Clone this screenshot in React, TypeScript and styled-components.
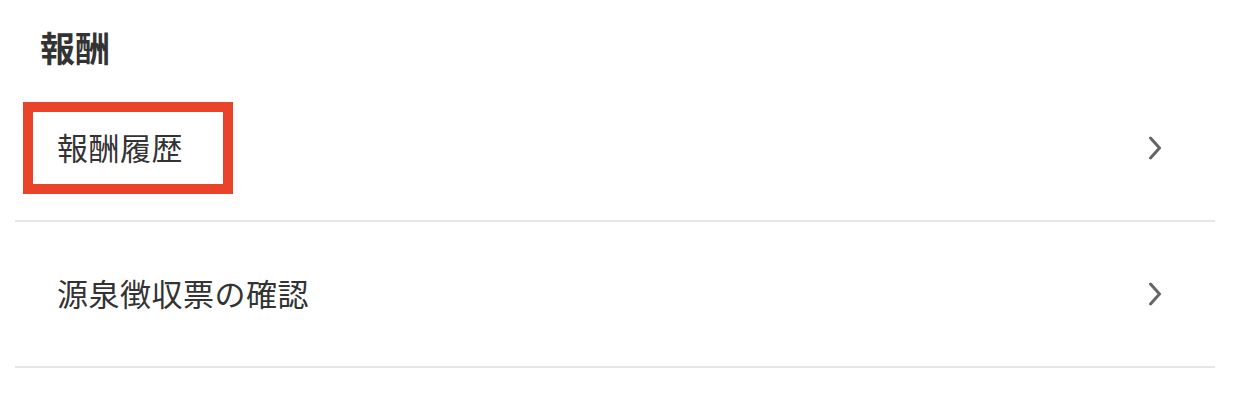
import React from "react";
import styled, { createGlobalStyle } from "styled-components";

const GlobalStyle = createGlobalStyle`
  html, body {
    margin: 0;
    padding: 0;
    background: #ffffff;
  }
  body {
    font-family: "Noto Sans CJK JP", "Noto Sans", sans-serif;
    color: #333333;
  }
`;

const Page = styled.div`
  padding: 0 31px 0 15px;
`;

const SectionTitle = styled.h2`
  margin: 0 0 10px 25px;
  padding-top: 28px;
  font-size: 35px;
  line-height: 38px;
  font-weight: 700;
  color: #333333;
`;

const List = styled.ul`
  list-style: none;
  margin: 0;
  padding: 0;
`;

const Row = styled.li`
  position: relative;
  display: flex;
  align-items: center;
  justify-content: space-between;
  height: 144px;
  padding: 0 53px 0 42px;
  border-bottom: 2px solid #e4e4e9;
  cursor: pointer;
`;

const Label = styled.span`
  font-size: 31px;
  line-height: 36px;
  color: #333333;
  letter-spacing: 0.5px;
  margin-top: -3px;
`;

const Highlight = styled.div`
  position: absolute;
  left: 8px;
  top: 26px;
  width: 190px;
  height: 72px;
  border: 10px solid #e9432a;
  pointer-events: none;
`;

const Chevron = styled.svg`
  width: 14px;
  height: 24px;
  flex: none;
`;

const ChevronIcon = () => (
  <Chevron viewBox="0 0 14 24">
    <polyline
      points="2.5,2 11.5,12 2.5,22"
      fill="none"
      stroke="#666666"
      strokeWidth="3"
      strokeLinecap="round"
      strokeLinejoin="round"
    />
  </Chevron>
);

const items = [
  { label: "報酬履歴", highlighted: true },
  { label: "源泉徴収票の確認", highlighted: false },
];

export default function App() {
  return (
    <>
      <GlobalStyle />
      <Page>
        <SectionTitle>報酬</SectionTitle>
        <List>
          {items.map((item) => (
            <Row key={item.label}>
              <Label>{item.label}</Label>
              <ChevronIcon />
              {item.highlighted && <Highlight />}
            </Row>
          ))}
        </List>
      </Page>
    </>
  );
}
